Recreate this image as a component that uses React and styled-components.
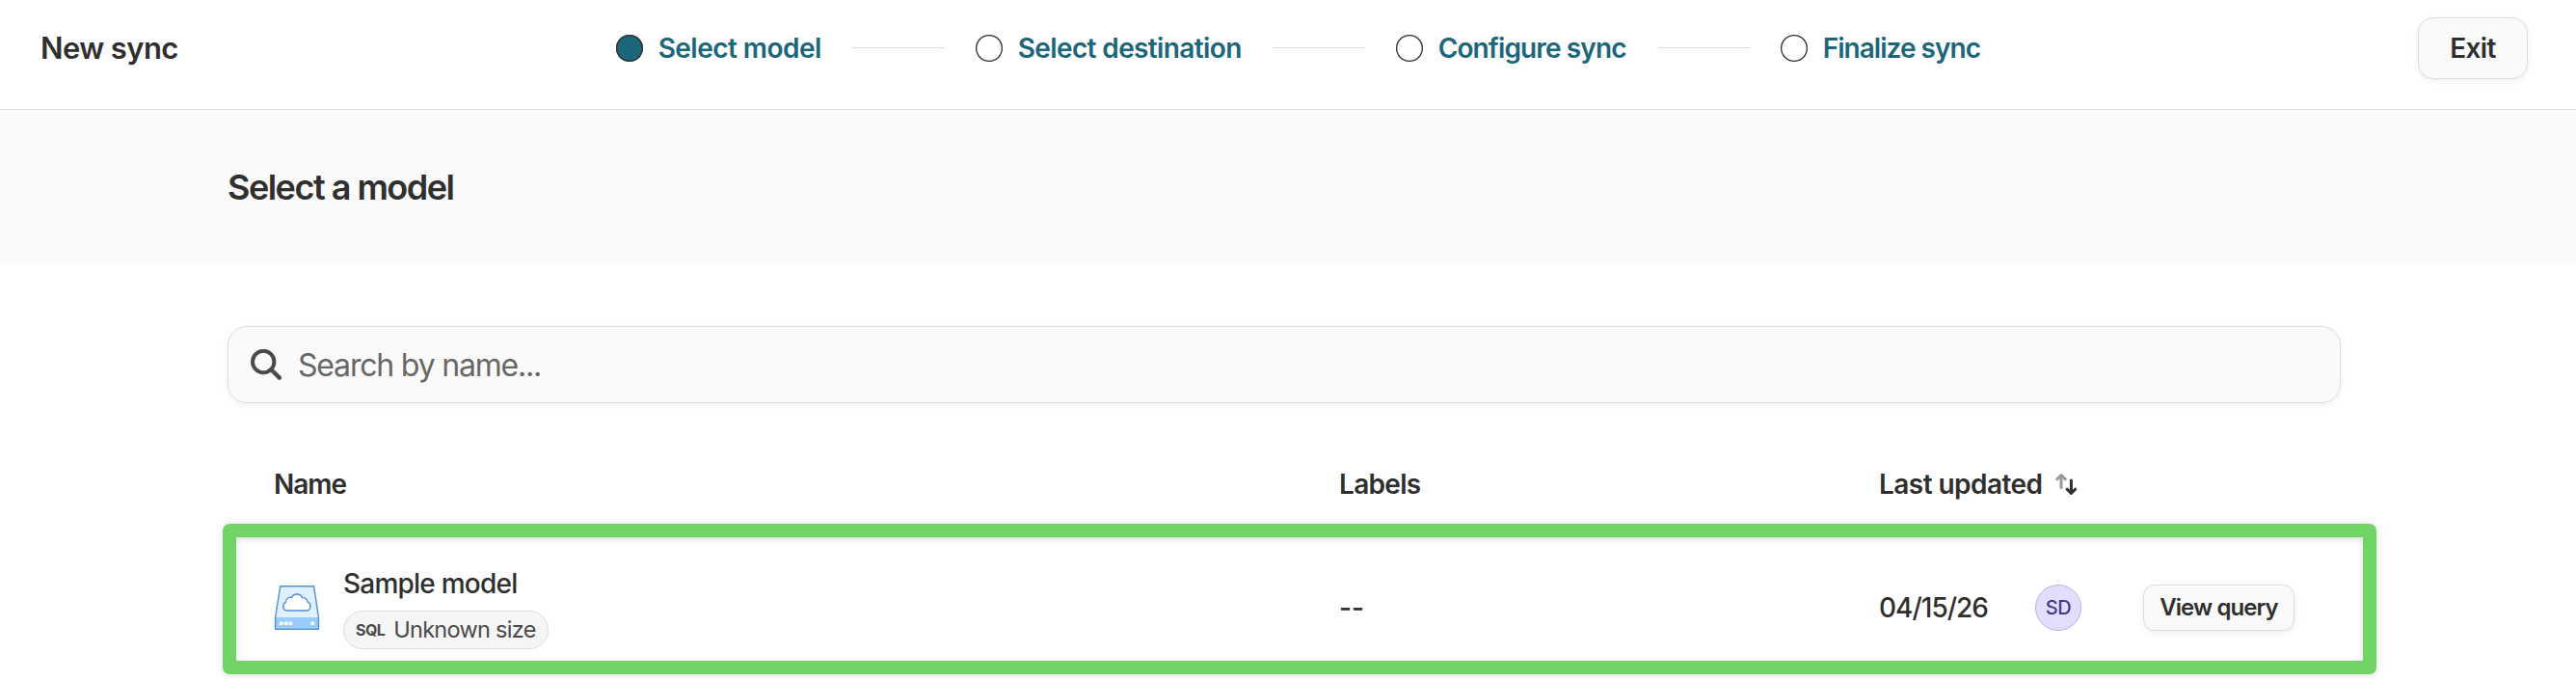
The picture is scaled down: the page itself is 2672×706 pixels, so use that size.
import React, { useState } from 'react'
import styled, { createGlobalStyle } from 'styled-components';

const GlobalStyle = createGlobalStyle`
  * {
    box-sizing: border-box;
  }

  body {
    margin: 0;
    background: #fff;
    color: #2f2f2f;
    font-family: Inter, "Liberation Sans", sans-serif;
    overflow: hidden;
  }
`

const PageWrap = styled.div`
  width: 100%;
  height: 706px;
  overflow: hidden;
`

const Text = styled.span`
  font-size: ${(p) => p.$size || 28}px;
  font-weight: ${(p) => p.$weight || 500};
  letter-spacing: ${(p) => p.$spacing || 0}px;
  line-height: 36px;
  white-space: nowrap;
`

const Header = styled.header`
  height: 114px;
  padding: 18px 50px 31px 42px;
  border-bottom: 1px solid #dcdddd;
  display: flex;
  align-items: center;
  justify-content: space-between;
`

const Stepper = styled.div`
  display: flex;
  align-items: center;
  gap: 32px;
`

const Step = styled.div`
  display: flex;
  align-items: center;
  gap: 16px;
  color: #1c667b;
`

const StepCircle = styled.div`
  width: 28px;
  height: 28px;
  box-shadow: inset 0 0 0 1.3px #2f2f2f;
  border-radius: 50%;
  background: ${(p) => (p.$active ? '#1c667b' : '#fff')};
`

const StepLine = styled.div`
  width: 96px;
  height: 1px;
  margin-bottom: 2px;
  background: #dcdddd;
`

const Button = styled.button`
  width: ${(p) => (p.$small ? 157 : 114)}px;
  height: ${(p) => (p.$small ? 48 : 64)}px;
  padding: 0;
  border: 1px solid #dcdddd;
  border-radius: ${(p) => (p.$small ? 12 : 16)}px;
  background: #fafafa;
  box-shadow: 0 2px 6px rgba(0, 0, 0, 0.07);
  color: inherit;
  font-family: inherit;
`

const TitleBar = styled.div`
  height: 160px;
  padding: 0 236px;
  display: flex;
  align-items: center;
  background: #fafafa;
`

const Title = styled.h1`
  margin: 0;
  font-size: 36px;
  font-weight: 600;
  letter-spacing: -1.5px;
`

const Content = styled.main`
  width: 2192px;
  margin: 64px 0 0 236px;
`

const SearchBox = styled.label`
  height: 80px;
  padding: 0 23px;
  border: 1px solid #dcdddd;
  border-radius: 20px;
  background: #fafafa;
  box-shadow: 0 2px 6px rgba(0, 0, 0, 0.06);
  display: flex;
  align-items: center;
  gap: 17px;

  input {
    flex: 1;
    padding: 0;
    border: 0;
    outline: 0;
    background: transparent;
    font-family: inherit;
    font-size: 32px;
    letter-spacing: -1.19px;
  }

  input::placeholder {
    color: #696666;
    opacity: 1;
  }
`

const Columns = styled.div`
  display: grid;
  grid-template-columns: 1105px 560px 1fr;
  align-items: center;
`

const TableHead = styled(Columns)`
  margin-top: 44px;
  height: 81px;
  padding: 0 48px 2px;
`

const SortHeader = styled.div`
  display: flex;
  align-items: center;
  gap: 13px;
`

const TableRow = styled(Columns)`
  width: 2234px;
  height: 156px;
  margin-left: -5px;
  padding: 17px 71px 0 39px;
  border: 14px solid #71d566;
  border-radius: 7px;
  box-shadow: 0 1px 6px rgba(0, 0, 0, 0.15), inset 0 2px 6px rgba(0, 0, 0, 0.15);
`

const NameCell = styled.div`
  display: flex;
  align-items: center;
  gap: 24px;
`

const NameStack = styled.div`
  display: flex;
  flex-direction: column;
  align-items: flex-start;
  gap: 10px;
`

const SizeBadge = styled.div`
  height: 40px;
  width: 213px;
  padding: 0 12px;
  border: 1px solid #dcdddd;
  border-radius: 20px;
  background: #f5f5f5;
  color: #4a4a4a;
  display: flex;
  align-items: center;
  gap: 9px;
`

const UpdatedCell = styled.div`
  display: flex;
  align-items: center;
  justify-content: space-between;
`

const DateOwner = styled.div`
  display: flex;
  align-items: center;
  gap: 49px;
`

const Avatar = styled.div`
  width: 48px;
  height: 48px;
  border: 1px solid #b9afe9;
  border-radius: 50%;
  background: #e4defe;
  color: #47388c;
  display: flex;
  align-items: center;
  justify-content: center;
`

const steps = [
  { label: 'Select model', spacing: -0.54 },
  { label: 'Select destination', spacing: -0.62 },
  { label: 'Configure sync', spacing: -0.88 },
  { label: 'Finalize sync', spacing: -0.96 },
];

function SearchIcon() {
  return (
    <svg width="32" height="32" viewBox="0 0 32 32" fill="none" stroke="#4a4a4a">
      <circle cx="13.2" cy="13" r="11.2" strokeWidth="4" />
      <path d="M21.4 21.2 29.8 29.6" strokeWidth="4.4" strokeLinecap="round" />
    </svg>
  )
}

function SortIcon() {
  return (
    <svg width="24" height="24" viewBox="0 0 24 24" fill="none" strokeWidth="3" strokeLinecap="round" strokeLinejoin="round">
      <path d="M7 15.5V3M2.8 6.8 7 2.6l4.2 4.2" stroke="#999" />
      <path d="M17.4 8v12.5M13.2 17.2l4.2 4.2 4.2-4.2" stroke="#2f2f2f" />
    </svg>
  )
}

function DriveIcon() {
  return (
    <svg width="48" height="48" viewBox="0 0 48 48">
      <path d="M6.8 1.7H41.6L46.4 34V46.4H1.6V34Z" fill="#dff0fe" />
      <path d="M1.6 34H46.4V46.4H1.6Z" fill="#98ccfd" />
      <path d="M6.8 1.7H41.6L46.4 34V46.4H1.6V34Z" fill="none" stroke="#5290cf" strokeWidth="1.4" />
      <path
        d="M13.8 27C11.3 27 9.8 25 9.8 22.6C9.8 20.3 11 18.7 12.6 18.1C12.6 15.2 14.6 13.4 17 13.4C17.6 13.4 18 13.5 18.4 13.6C19.4 11.4 21.4 10 23.9 10C26.4 10 28.5 11.4 29.5 13.6C32.6 13.4 35 15.4 35.1 18.2C37 18.8 38 20.6 38 22.6C38 25 36.4 27 34 27Z"
        fill="#fff"
        stroke="#5290cf"
        strokeWidth="1.4"
      />
      <g fill="#fff">
        <circle cx="7.7" cy="40.3" r="2" />
        <circle cx="12.6" cy="40.3" r="2" />
        <circle cx="17.3" cy="40.3" r="2" />
        <circle cx="40.3" cy="40.3" r="2" />
      </g>
    </svg>
  )
}

function App() {
  const [search, setSearch] = useState("");

  return (
    <PageWrap>
      <GlobalStyle />
      <Header>
        <Text $size={31} $weight={600} $spacing={-0.6}>New sync</Text>
        <Stepper>
          {steps.map((step, i) => (
            <React.Fragment key={step.label}>
              {i > 0 && <StepLine />}
              <Step>
                <StepCircle $active={i === 0} />
                <Text $weight={600} $spacing={step.spacing}>{step.label}</Text>
              </Step>
            </React.Fragment>
          ))}
        </Stepper>
        <Button><Text $weight={600} $spacing={-0.6}>Exit</Text></Button>
      </Header>

      <TitleBar>
        <Title>Select a model</Title>
      </TitleBar>

      <Content>
        <SearchBox>
          <SearchIcon />
          <input
            placeholder='Search by name...'
            value={search}
            onChange={(e) => setSearch(e.target.value)}
            type='text' />
        </SearchBox>

        <TableHead>
          <Text $weight={600} $spacing={-1}>Name</Text>
          <Text $weight={600} $spacing={-0.7}>Labels</Text>
          <SortHeader>
            <Text $weight={600} $spacing={-0.55}>Last updated</Text>
            <SortIcon />
          </SortHeader>
        </TableHead>

        <TableRow>
          <NameCell>
            <DriveIcon />
            <NameStack>
              <Text $spacing={-0.77}>Sample model</Text>
              <SizeBadge>
                <Text $size={16} $weight={700} $spacing={-0.6}>SQL</Text>
                <Text $size={23.5} $weight={400} $spacing={-0.7}>Unknown size</Text>
              </SizeBadge>
            </NameStack>
          </NameCell>
          <Text>--</Text>
          <UpdatedCell>
            <DateOwner>
              <Text $spacing={-1}>04/15/26</Text>
              <Avatar><Text $size={20} $spacing={-0.5}>SD</Text></Avatar>
            </DateOwner>
            <Button $small><Text $size={24} $weight={600} $spacing={-0.9}>View query</Text></Button>
          </UpdatedCell>
        </TableRow>
      </Content>
    </PageWrap>
  )
}


export default App;
